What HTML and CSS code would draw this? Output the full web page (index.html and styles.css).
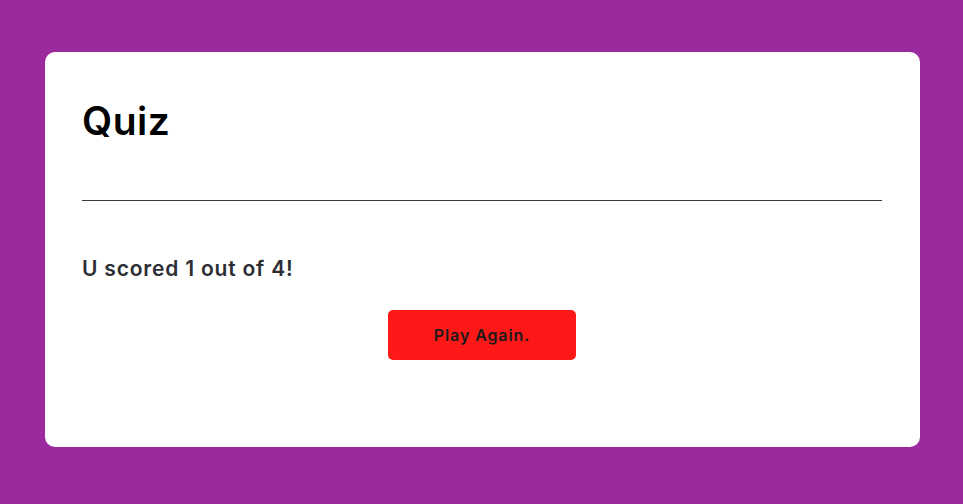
FILE: index.html
```html
<!DOCTYPE html>
<html>
<head>
<meta charset="utf-8">
<link rel="stylesheet" href="styles.css">
</head>
<body>
<div class="card">
  <h1 class="title">Quiz</h1>
  <hr class="divider">
  <p class="score">U scored 1 out of 4!</p>
  <div class="actions"><button class="btn">Play Again.</button></div>
</div>
</body>
</html>
```
FILE: styles.css
```css
html, body { margin: 0; height: 100%; }
body {
  background: #9b2a9f;
  font-family: Inter, "Noto Sans", sans-serif;
  padding: 52px 43px 0 45px;
  box-sizing: border-box;
}
.card {
  background: #fff;
  border-radius: 10px;
  height: 395px;
  box-sizing: border-box;
  padding: 37px 38px 0 37px;
}
.title {
  margin: 0;
  height: 111px;
  box-sizing: border-box;
  padding-top: 8px;
  font-size: 39px;
  line-height: 47px;
  font-weight: 600;
  color: #000;
  letter-spacing: 0.5px;
}
.divider {
  margin: 0;
  border: 0;
  height: 1px;
  background: #3a3a3a;
}
.score {
  margin: 53px 0 0;
  font-size: 21px;
  font-weight: 600;
  color: #2d2d35;
  line-height: 30px;
  letter-spacing: 0.8px;
}
.actions {
  display: flex;
  justify-content: center;
  margin-top: 26px;
}
.btn {
  width: 188px;
  height: 50px;
  border: 0;
  border-radius: 5px;
  background: #ff1818;
  color: #1a1a1a;
  font-family: inherit;
  font-size: 16px;
  font-weight: 600;
  letter-spacing: 0.9px;
}
```
